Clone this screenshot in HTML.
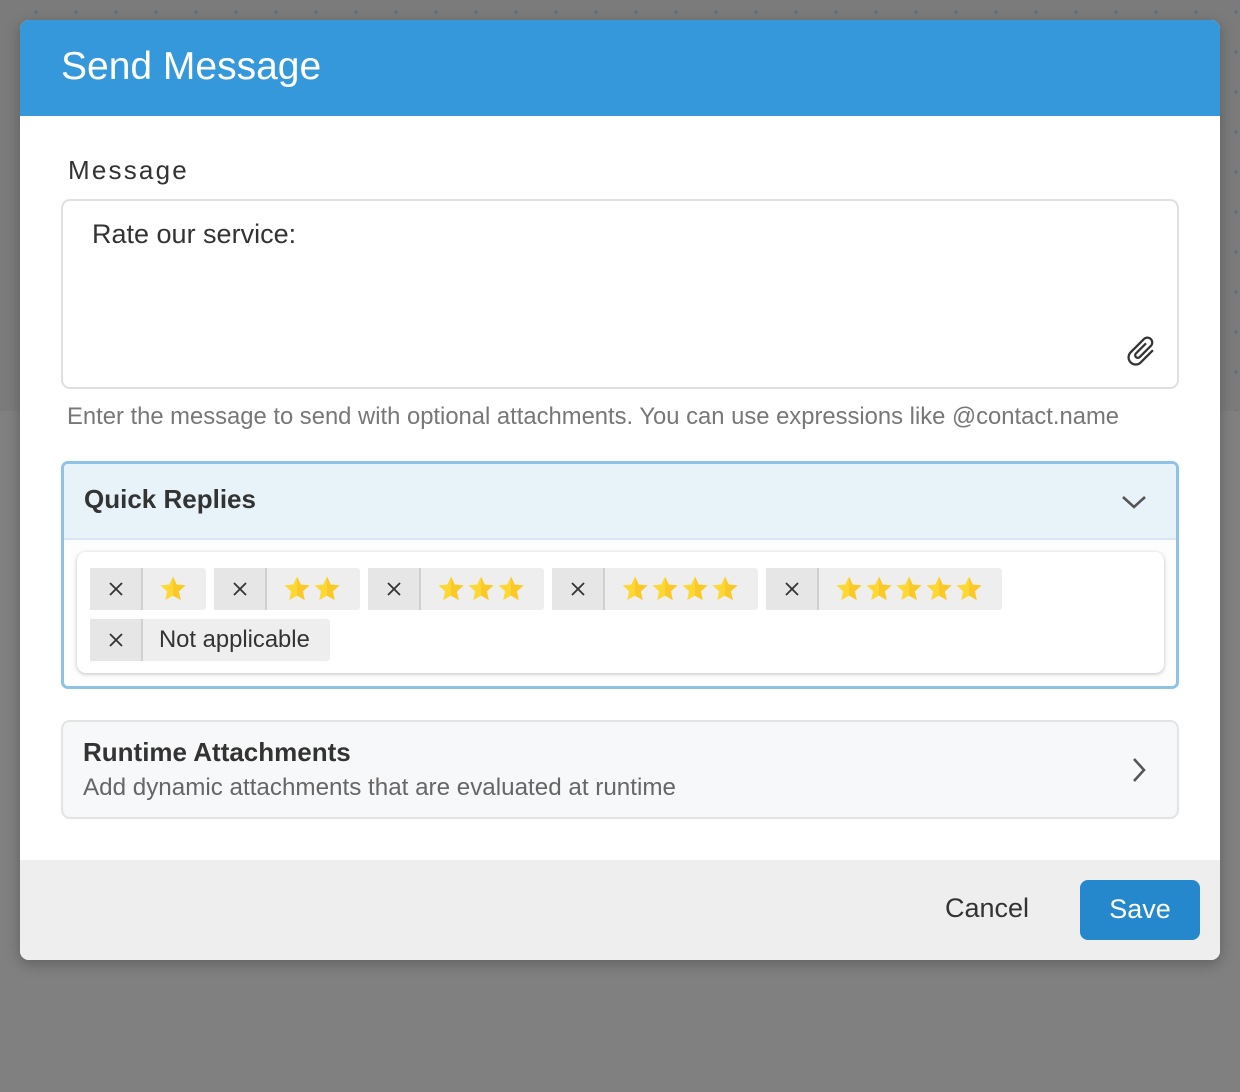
<!DOCTYPE html>
<html><head><meta charset="utf-8"><style>
*{box-sizing:border-box;margin:0;padding:0}
body{width:1240px;height:1092px;overflow:hidden;background:#808080;font-family:"Liberation Sans",Arial,sans-serif;position:relative}
.bgtop{position:absolute;left:0;top:0;width:1240px;height:411px;background-color:#7b7b7b;background-image:radial-gradient(circle,#5d6f84 1.6px,transparent 2px);background-size:40px 40px;background-position:16px -8px}
.modal{position:absolute;left:20px;top:20px;width:1200px;height:940px;background:#fff;border-radius:9px;overflow:hidden;box-shadow:0 4px 14px rgba(0,0,0,.25)}
.hdr{height:96px;background:#3598db;color:#fff;font-size:39px;padding:25px 0 0 41px}
.a{position:absolute}
.chip{position:absolute;height:42px;background:#eee;border-radius:3px;display:flex;align-items:center}
.chip .x{width:53px;height:42px;background:#e6e6e6;border-right:2px solid #d0d0d0;display:flex;align-items:center;justify-content:center}
.chip .c{padding:0 16px 0 16px;display:flex;gap:2px;font-size:23.8px;color:#333}
</style></head><body>
<div class="bgtop"></div>
<svg width="0" height="0" style="position:absolute"><defs>
<symbol id="st" viewBox="0 0 28 28"><path d="M14 1.5l3.7 8 8.8.9-6.6 6 1.9 8.7L14 20.6l-7.8 4.5 1.9-8.7-6.6-6 8.8-.9z" fill="#fdd835"/><path d="M14 1.5l3.7 8 8.8.9-6.6 6 1.9 8.7L14 20.6z" fill="#f9c020" opacity=".6"/></symbol>
<symbol id="xx" viewBox="0 0 16 16"><path d="M2 2L14 14M14 2L2 14" stroke="#333" stroke-width="1.8"/></symbol>
</defs></svg>
<div class="modal">
<div class="hdr">Send Message</div>
<div class="a" style="left:48px;top:135px;font-size:26px;letter-spacing:2.2px;color:#333">Message</div>
<div class="a" style="left:41px;top:179px;width:1118px;height:190px;border:2px solid #e0e0e0;border-radius:9px"></div>
<div class="a" style="left:72px;top:199px;font-size:27px;color:#333">Rate our service:</div>
<svg class="a" style="left:1103px;top:313px" width="36" height="36" viewBox="0 0 24 24"><path transform="rotate(45 12 12)" fill="#333" d="M16.5 6v11.5c0 2.21-1.79 4-4 4s-4-1.79-4-4V5c0-1.38 1.12-2.5 2.5-2.5s2.5 1.12 2.5 2.5v10.5c0 .55-.45 1-1 1s-1-.45-1-1V6H10v9.5c0 1.38 1.12 2.5 2.5 2.5s2.5-1.12 2.5-2.5V5c0-2.210-1.79-4-4-4S7 2.79 7 5v12.5c0 3.04 2.46 5.5 5.5 5.5s5.5-2.46 5.5-5.5V6h-1.5z"/></svg>
<div class="a" style="left:47px;top:383px;font-size:23.8px;color:#777">Enter the message to send with optional attachments. You can use expressions like @contact.name</div>

<div class="a" style="left:41px;top:441px;width:1118px;height:228px;border:3px solid #8fc3e6;border-radius:7px;overflow:hidden;background:#fdfdfd">
 <div style="height:76px;background:#e8f2f9;border-bottom:2px solid #d6e6f2;font-size:26px;font-weight:bold;color:#333;padding:20px 0 0 20px">Quick Replies</div>
 <svg class="a" style="right:28px;top:30px" width="28" height="16" viewBox="0 0 28 16"><path d="M3 3l11 10 11-10" stroke="#555" stroke-width="2.6" fill="none"/></svg>
 <div class="a" style="left:13px;top:88px;width:1087px;height:121px;background:#fff;border-radius:9px;box-shadow:0 1px 4px rgba(0,0,0,.25)"></div>
</div>
<div class="chip" style="left:70px;top:548px;width:116px"><div class="x"><svg width="16" height="16"><use href="#xx"/></svg></div><div class="c"><svg width="28" height="28"><use href="#st"/></svg></div></div>
<div class="chip" style="left:194px;top:548px;width:146px"><div class="x"><svg width="16" height="16"><use href="#xx"/></svg></div><div class="c"><svg width="28" height="28"><use href="#st"/></svg><svg width="28" height="28"><use href="#st"/></svg></div></div>
<div class="chip" style="left:348px;top:548px;width:176px"><div class="x"><svg width="16" height="16"><use href="#xx"/></svg></div><div class="c"><svg width="28" height="28"><use href="#st"/></svg><svg width="28" height="28"><use href="#st"/></svg><svg width="28" height="28"><use href="#st"/></svg></div></div>
<div class="chip" style="left:532px;top:548px;width:206px"><div class="x"><svg width="16" height="16"><use href="#xx"/></svg></div><div class="c"><svg width="28" height="28"><use href="#st"/></svg><svg width="28" height="28"><use href="#st"/></svg><svg width="28" height="28"><use href="#st"/></svg><svg width="28" height="28"><use href="#st"/></svg></div></div>
<div class="chip" style="left:746px;top:548px;width:236px"><div class="x"><svg width="16" height="16"><use href="#xx"/></svg></div><div class="c"><svg width="28" height="28"><use href="#st"/></svg><svg width="28" height="28"><use href="#st"/></svg><svg width="28" height="28"><use href="#st"/></svg><svg width="28" height="28"><use href="#st"/></svg><svg width="28" height="28"><use href="#st"/></svg></div></div>
<div class="chip" style="left:70px;top:599px;width:240px"><div class="x"><svg width="16" height="16"><use href="#xx"/></svg></div><div class="c">Not applicable</div></div>

<div class="a" style="left:41px;top:700px;width:1118px;height:99px;border:2px solid #e3e3e3;border-radius:9px;background:#f7f8fa">
 <div class="a" style="left:20px;top:15px;font-size:26px;font-weight:bold;color:#333">Runtime Attachments</div>
 <div class="a" style="left:20px;top:52px;font-size:24.2px;color:#666">Add dynamic attachments that are evaluated at runtime</div>
 <svg class="a" style="right:30px;top:34px" width="16" height="28" viewBox="0 0 16 28"><path d="M3 3l10 11-10 11" stroke="#555" stroke-width="2.6" fill="none"/></svg>
</div>

<div class="a" style="left:0;top:840px;width:1200px;height:100px;background:#eee">
 <div class="a" style="left:925px;top:33px;font-size:27px;color:#333">Cancel</div>
 <div class="a" style="left:1060px;top:20px;width:120px;height:60px;background:#2688cc;border-radius:8px;color:#fff;font-size:27px;text-align:center;line-height:58px">Save</div>
</div>
</div>
</body></html>
